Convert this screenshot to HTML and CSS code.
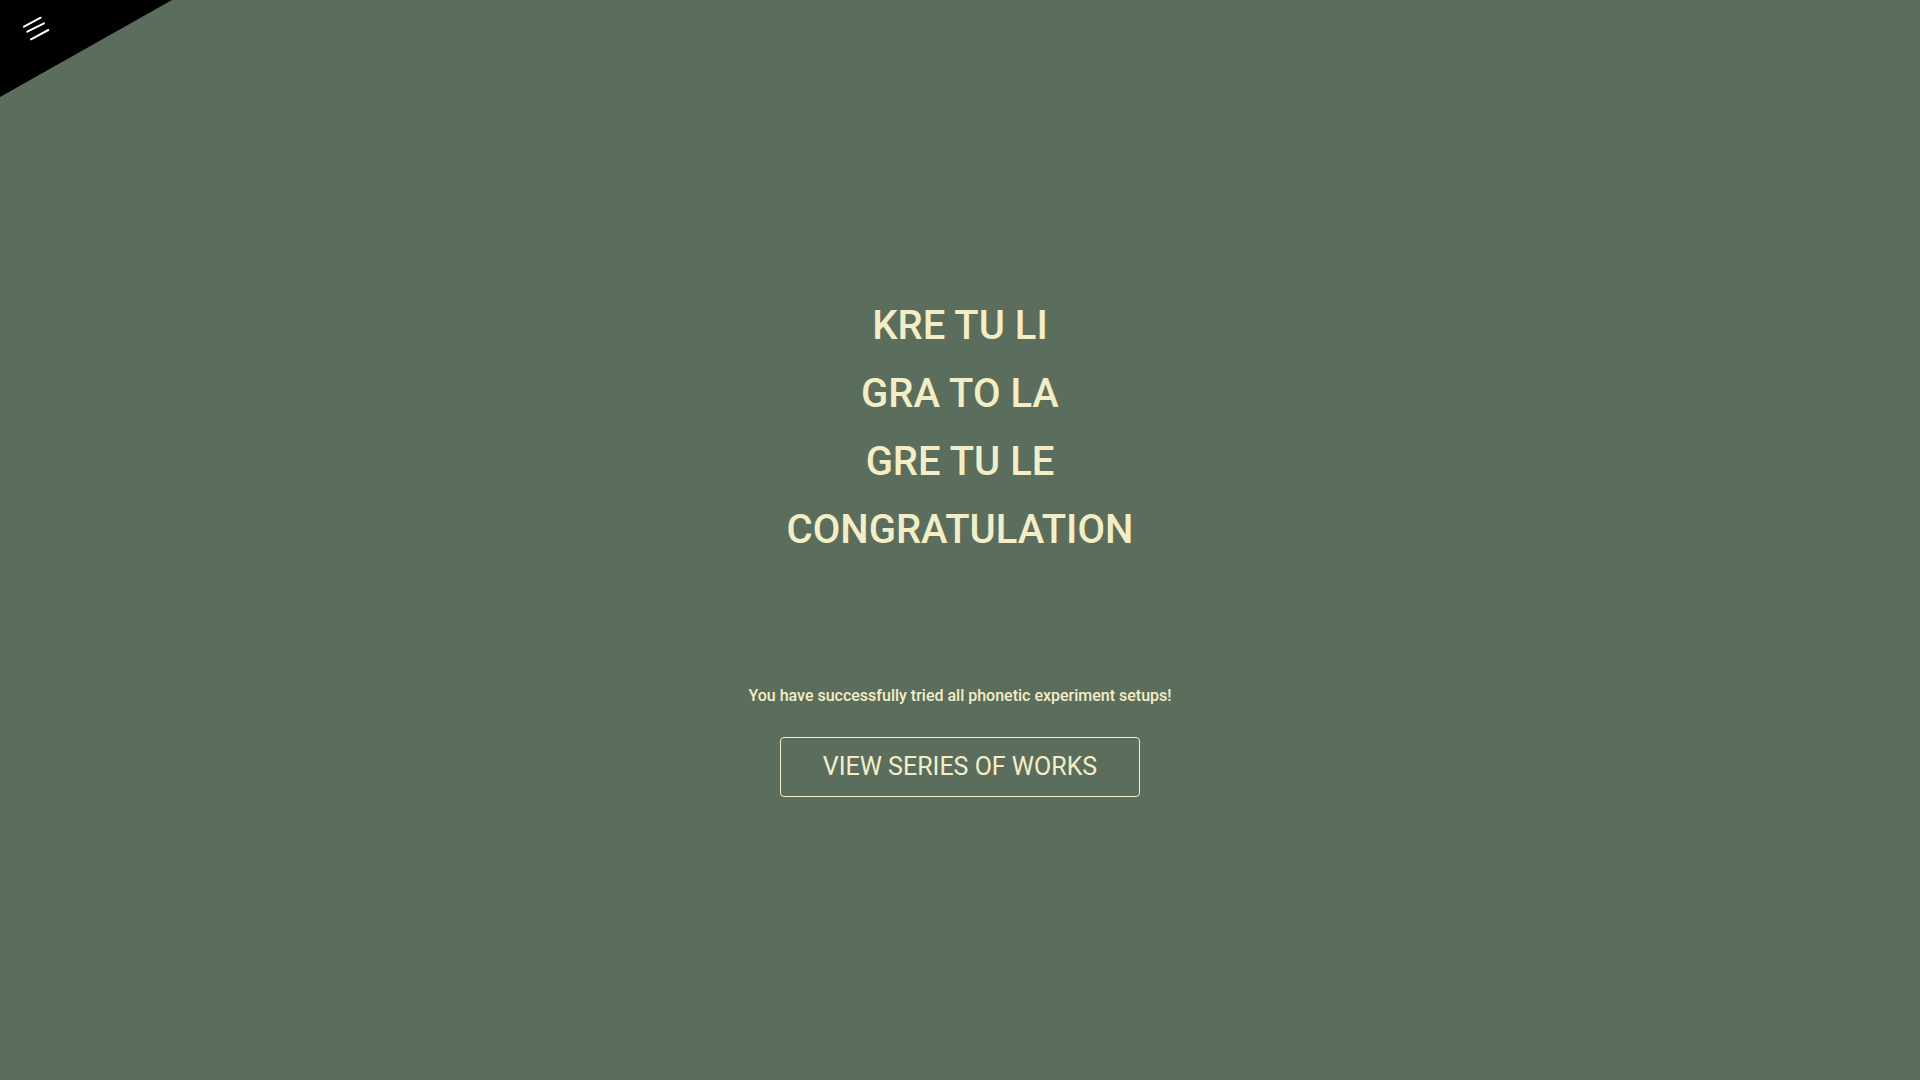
FILE: index.html
```html
<!DOCTYPE html>
<html>
<head lang="en">
    <meta charset="UTF-8">
    <title>Phonetic Experiment - Congratulation</title>
    <link rel="stylesheet" href="styles.css">
</head>
<body>
<a href="#" class="menu-corner" aria-label="Menu">
    <svg class="menu-icon" width="40" height="40" viewBox="0 0 40 40">
        <line x1="9" y1="16.7" x2="25.7" y2="7.7" />
        <line x1="12.3" y1="21.7" x2="29" y2="13.3" />
        <line x1="16" y1="29.3" x2="33.3" y2="20" />
    </svg>
</a>
<div class="container">
    <div class="words">
        <p class="word">KRE TU LI</p>
        <p class="word">GRA TO LA</p>
        <p class="word">GRE TU LE</p>
        <p class="word">CONGRATULATION</p>
    </div>
    <p class="message">You have successfully tried all phonetic experiment setups!</p>
    <a href="#" class="btn">VIEW SERIES OF WORKS</a>
</div>
</body>
</html>
```

FILE: styles.css
```css
html, body {
    height: 100%;
}
body {
    background: #5b6d5d;
    margin: 0px;
    font-family: Roboto, "Noto Sans", sans-serif;
    color: #f4eec6;
}
.menu-corner {
    position: fixed;
    top: 0;
    left: 0;
    width: 172px;
    height: 97px;
    background: #000;
    clip-path: polygon(0 0, 100% 0, 0 100%);
}
.menu-icon {
    position: absolute;
    top: 10px;
    left: 15px;
}
.menu-icon line {
    stroke: #fff;
    stroke-width: 2;
    stroke-linecap: round;
}
.container {
    box-sizing: border-box;
    height: 100%;
    padding-top: 8px;
    display: flex;
    flex-direction: column;
    align-items: center;
    justify-content: center;
    text-align: center;
    user-select: none;
}
.word {
    margin: 0px;
    font-size: 40px;
    line-height: 68px;
    font-weight: 500;
}
.message {
    margin: 120px 0 0 0;
    font-size: 16px;
    font-weight: 500;
    line-height: 24px;
}
.btn {
    margin-top: 29px;
    box-sizing: border-box;
    width: 360px;
    height: 60px;
    display: flex;
    align-items: center;
    justify-content: center;
    border: 1px solid #f4eec6;
    border-radius: 4px;
    color: #f4eec6;
    font-size: 25px;
    font-weight: 400;
    text-decoration: none;
}
```
